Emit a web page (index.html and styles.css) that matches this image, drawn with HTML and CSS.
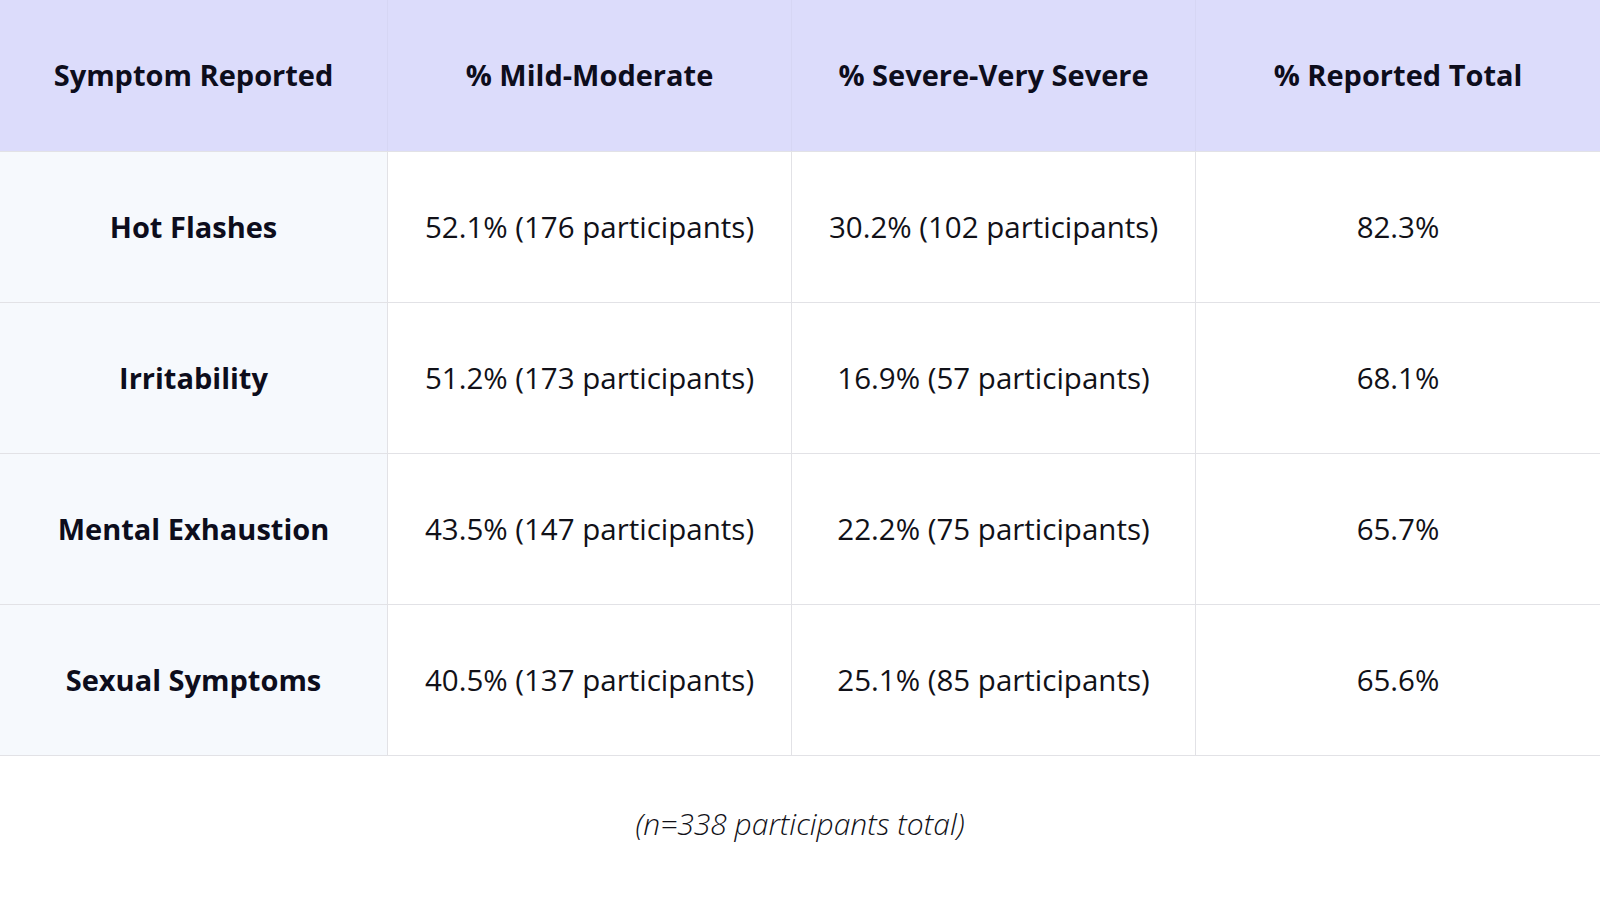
FILE: index.html
```html
<!DOCTYPE html>
<html>
<head>
<meta charset="utf-8">
<link rel="stylesheet" href="styles.css">
</head>
<body>
<div class="page">
  <div class="table">
    <div class="cell head">Symptom Reported</div>
    <div class="cell head">% Mild-Moderate</div>
    <div class="cell head">% Severe-Very Severe</div>
    <div class="cell head last">% Reported Total</div>

    <div class="cell label">Hot Flashes</div>
    <div class="cell">52.1% (176 participants)</div>
    <div class="cell">30.2% (102 participants)</div>
    <div class="cell last">82.3%</div>

    <div class="cell label">Irritability</div>
    <div class="cell">51.2% (173 participants)</div>
    <div class="cell">16.9% (57 participants)</div>
    <div class="cell last">68.1%</div>

    <div class="cell label">Mental Exhaustion</div>
    <div class="cell">43.5% (147 participants)</div>
    <div class="cell">22.2% (75 participants)</div>
    <div class="cell last">65.7%</div>

    <div class="cell label">Sexual Symptoms</div>
    <div class="cell">40.5% (137 participants)</div>
    <div class="cell">25.1% (85 participants)</div>
    <div class="cell last">65.6%</div>
  </div>
  <p class="note">(n=338 participants total)</p>
</div>
</body>
</html>
```

FILE: styles.css
```css
html, body {
  margin: 0;
  padding: 0;
  background: #ffffff;
}

.page {
  width: 1600px;
  height: 900px;
  display: flex;
  flex-direction: column;
}

.table {
  display: grid;
  grid-template-columns: 388px 404px 404px 404px;
  grid-template-rows: 151px 151px 151px 151px 151px;
  border-bottom: 1px solid #e2e2e6;
}

.cell {
  display: flex;
  align-items: center;
  justify-content: center;
  padding-bottom: 2px;
  font-family: "Open Sans", "Noto Sans", sans-serif;
  font-size: 29.5px;
  color: #111118;
  border-right: 1px solid #e2e2e6;
  border-top: 1px solid #e2e2e6;
  background: #ffffff;
}

.cell.last {
  border-right: none;
}

.head {
  background: #dcdcfb;
  font-weight: 700;
  font-size: 29px;
  border-top: none;
  border-right: 1px solid #d6d6f4;
  color: #0d0d1c;
}

.label {
  background: #f6f9fd;
  font-weight: 700;
  font-size: 29px;
  color: #0d0d1c;
}

.note {
  margin: 0;
  padding-top: 47px;
  text-align: center;
  font-family: "Open Sans", "Noto Sans", sans-serif;
  font-style: italic;
  font-weight: 300;
  font-size: 30px;
  color: #111118;
}
```
